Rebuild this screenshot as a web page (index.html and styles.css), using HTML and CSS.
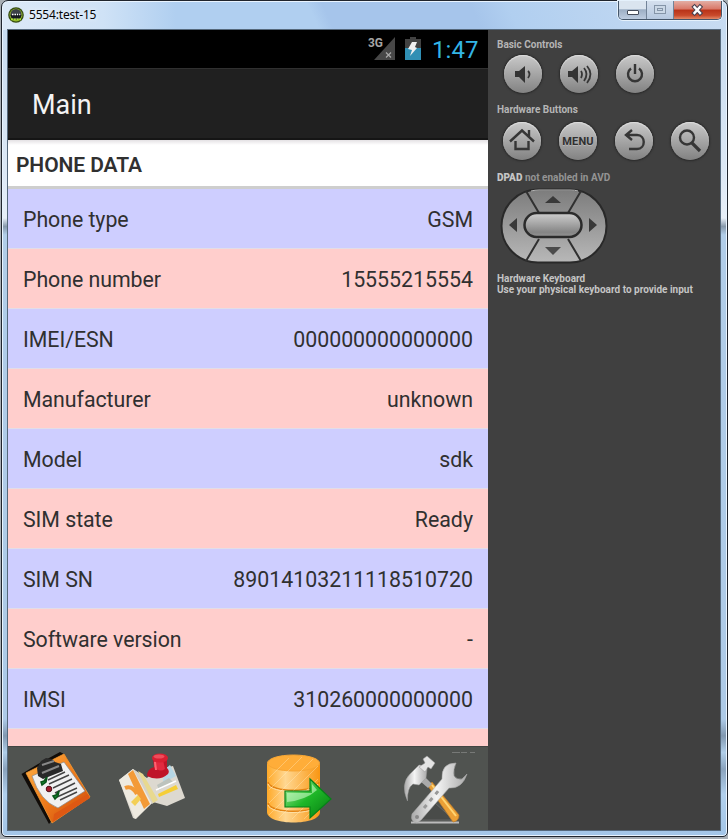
FILE: index.html
```html
<!DOCTYPE html>
<html lang="en">
<head>
<meta charset="utf-8">
<title>5554:test-15</title>
<link rel="stylesheet" href="styles.css">
</head>
<body>
<svg class="defs" width="0" height="0" aria-hidden="true">
  <defs>
    <linearGradient id="metal" x1="0" y1="0" x2="0" y2="1"><stop offset="0" stop-color="#d0d0d0"/><stop offset=".8" stop-color="#858585"/><stop offset="1" stop-color="#959595"/></linearGradient>
    <linearGradient id="metalUp" x1="0" y1="0" x2="0" y2="1"><stop offset="0" stop-color="#7c7c7c"/><stop offset="1" stop-color="#b8b8b8"/></linearGradient>
    <linearGradient id="orange" x1="0" y1="0" x2="1" y2="1"><stop offset="0" stop-color="#ffb347"/><stop offset=".5" stop-color="#ef7c1c"/><stop offset="1" stop-color="#c94308"/></linearGradient>
    <linearGradient id="gold" x1="0" y1="0" x2="1" y2="0"><stop offset="0" stop-color="#ffa928"/><stop offset=".35" stop-color="#ffd791"/><stop offset="1" stop-color="#f99612"/></linearGradient>
    <linearGradient id="green" x1="0" y1="0" x2="1" y2="1"><stop offset="0" stop-color="#b4f0a8"/><stop offset=".5" stop-color="#1fb728"/><stop offset="1" stop-color="#047b10"/></linearGradient>
    <linearGradient id="steel" x1="0" y1="0" x2="1" y2="0"><stop offset="0" stop-color="#aaa"/><stop offset=".45" stop-color="#f4f4f4"/><stop offset="1" stop-color="#aaa"/></linearGradient>
  </defs>
</svg>
<div class="window">
  <header class="titlebar">
    <svg class="app-icon" width="16" height="16" viewBox="0 0 16 16"><circle cx="8" cy="8" r="7.8" fill="#354a12"/><circle cx="8" cy="8" r="6.5" fill="#91b52c"/><circle cx="8" cy="7.5" r="5.5" fill="#3c4148"/><path d="M2.5 8h11l-1 3h-9z" fill="#15191d"/><path d="M4 7.5h1.5M6.5 7.5H8M9 7.5h1M11.2 7.5h1" stroke="#fff" stroke-width="1.5"/><path d="M3 12.4h10" stroke="#a9e12d" stroke-width="1.8" stroke-dasharray="2 .8"/></svg>
    <span class="title">5554:test-15</span>
    <div class="caption">
      <span class="cap min"><svg width="27" height="18"><rect x="8.5" y="9.5" width="11" height="4" rx=".5" fill="#fff" stroke="#454c5b"/></svg></span>
      <span class="cap max"><svg width="26" height="18"><g fill="none" stroke="#8595a8"><rect x="7.5" y="4.5" width="11" height="8" fill="#cbd8e6"/><rect x="10.5" y="7.5" width="5" height="2"/></g></svg></span>
      <span class="cap close"><svg width="47" height="18"><path d="M20.500 6l5.500 6M26 6l-5.500 6" stroke="#4b4350" stroke-width="4.500" stroke-linecap="square"/><path d="M20.500 6l5.500 6M26 6l-5.500 6" stroke="#fff" stroke-width="2.400" stroke-linecap="square"/></svg></span>
    </div>
  </header>
  <div class="client">
    <main class="phone">
      <div class="status">
        <svg class="signal" width="30" height="26" viewBox="0 0 30 26"><path d="M27 2v23H6z" fill="#474747"/><path d="M18 17.500l5 5M23 17.500l-5 5" stroke="#aaa" stroke-width="1.200"/><text x="0" y="12" class="net" textLength="15" lengthAdjust="spacingAndGlyphs">3G</text></svg>
        <svg class="battery" width="16" height="24" viewBox="0 0 16 24"><path d="M0 3h5V1h6v2h5v9H0z" fill="#424242"/><path d="M0 12h16v12H0z" fill="#308fb4"/><path d="M7 6h5l-2 5 2 1-7 8 2-6-4-1z" fill="#f0f0f0"/></svg>
        <span class="clock">1:47</span>
      </div>
      <div class="actionbar">Main</div>
      <h1 class="section">PHONE DATA</h1>
      <dl class="rows">
        <div class="row"><dt>Phone type</dt><dd>GSM</dd></div>
        <div class="row"><dt>Phone number</dt><dd>15555215554</dd></div>
        <div class="row"><dt>IMEI/ESN</dt><dd>000000000000000</dd></div>
        <div class="row"><dt>Manufacturer</dt><dd>unknown</dd></div>
        <div class="row"><dt>Model</dt><dd>sdk</dd></div>
        <div class="row"><dt>SIM state</dt><dd>Ready</dd></div>
        <div class="row"><dt>SIM SN</dt><dd>89014103211118510720</dd></div>
        <div class="row"><dt>Software version</dt><dd>-</dd></div>
        <div class="row"><dt>IMSI</dt><dd>310260000000000</dd></div>
        <div class="row"></div>
      </dl>
      <nav class="tools">
        <svg width="96" height="84" viewBox="0 0 96 84"><path d="M13.500 27L30 17l22-12 4 2 5 8-10 50-10 12z" fill="#110c08"/><path d="M18 26l38-19 26 43-38 26z" fill="url(#orange)" stroke="#f59a32" stroke-width=".8"/><path d="M46 67l34-20 2 4-37 24z" fill="#dd5813"/><path d="M24 29l32-14 21 29-27 17q-18-7-26-32" fill="#f1f1f1" stroke="#888" stroke-width=".7"/><path d="M29 21l4-7 5-3 6 1 3 3 6 2 2 7-20 8-5-3z" fill="#292929"/><path d="M34 18l12-4M34 26l17-7" stroke="#888" stroke-width="2"/><g stroke="#444" stroke-width="1.400"><path d="M40 33l17-8M41 37l20-9M45 41l19-9M47 46l20-10M49 50l20-9M52 53l17-8"/></g><path d="M33 35l3-1 3-4-1 5-4 3zM45 49l3-1 3-4-1 5-3 3z" fill="#168c32" stroke="#075318" stroke-width="1.500"/><circle cx="41" cy="42" r="2.800" fill="#a51d2c" stroke="#501018"/></svg>
        <svg width="96" height="84" viewBox="0 0 96 84"><path d="M15 33l14-11 14 9 8-8 18-4 12 32-18 8-14-4-17 17-3-1z" fill="#ddd9d0"/><path d="M15 33l14-11 19 34-17 16z" fill="#eeeae0"/><path d="M29 22l12 9 10 24-3 2z" fill="#d7d2c6"/><path d="M34 24l5 3 15 26-5 3z" fill="#e8d98f"/><path d="M24 27l5-4 17 34-6 5z" fill="#f39a37"/><path d="M21 41q7-3 12 6" fill="none" stroke="#f39a37" stroke-width="4"/><path d="M27 55l7-7 3 4-6 7z" fill="#f3cf55"/><path d="M54 47l18-9 2 4-19 8z" fill="#f5ce37"/><path d="M60 23l6-5 6 11-13 7z" fill="#b6d7e5"/><path d="M53 38l12-7 4 4-14 8z" fill="#bdc3bd"/><path d="M52 43l20-9" stroke="#fff" stroke-width="1.500"/><path d="M43 29q0-7 7-9l-1-8h14v9q3 3 1 6-9 8-21 2" fill="#bf1428"/><path d="M50 20v-7h9l2 9q-5 4-11-2" fill="#e22a40"/><ellipse cx="56" cy="11" rx="8" ry="4.500" fill="#d91f32"/><ellipse cx="55" cy="9.500" rx="5.500" ry="2" fill="#ee4d5b"/><path d="M51 15l1 8" stroke="#ff6170" stroke-width="2"/></svg>
        <svg class="database" width="192" height="84" viewBox="0 0 192 84"><path d="M67 17v48c0 14 53 14 53 0V17z" fill="url(#gold)"/><ellipse cx="93.500" cy="16" rx="26" ry="8" fill="#ffad39" stroke="#f7a634"/><path d="M68 35c2 11 49 11 51 0M68 56c2 11 49 11 51 0" fill="none" stroke="#e48413" stroke-width="1.500"/><path d="M68 37c3 10 47 10 50 0M68 58c3 10 47 10 50 0" fill="none" stroke="#ffe0a5"/><g stroke="#fff1cc" stroke-width=".7" opacity=".5"><path d="M69 31l20-20M69 43l33-33M69 56l44-44M69 68l49-49M79 71l39-39M92 72l26-26M104 72l14-14"/></g><path d="M85 44h25V32l21 20-21 19V60H85z" fill="url(#green)" stroke="#078118" stroke-width="1.200"/><path d="M87 46h25v-9l5 6q-11 10-30 12z" fill="#d3ffd0" opacity=".55"/></svg>
        <svg width="96" height="84" viewBox="0 0 96 84"><path d="M19 75.500h48" stroke="#bbb" stroke-width="2"/><path d="M43 56L29 73h33z" fill="#494b49" stroke="#777" stroke-width=".6"/><path d="M36 39l4-4 27 33q0 6-6 7z" fill="#eba036" stroke="#bc7b2a" stroke-width=".7"/><path d="M40 38l24 31" stroke="#ffd573" stroke-width="2"/><path d="M28 34l5-4 7 7-4 4z" fill="#aaa"/><path d="M15.500 54Q8 37 18 27l9-9q6 0 8 4l-1 9-7 7-6-1q-6 4-5.500 17" fill="url(#steel)" stroke="#999" stroke-width=".5"/><path d="M31 12l4-3 8 7-4 6-3-2-3 5-6-5 6-4z" fill="#e4e4e4" stroke="#999" stroke-width=".5"/><path d="M64 16q-15 0-14 16L20 67q-2 8 5 9l4-3 28-32q13 1 18-14l-5 5q-5 1-8-3-1-7 2-13" fill="url(#steel)" stroke="#aaa" stroke-width=".6"/><circle cx="25" cy="70" r="2" fill="#888"/><path d="M32 61l15-18" stroke="#999" stroke-width="3" stroke-dasharray="4 5"/><path d="M60 5.500h8M69 5.500h6M78 5.500h5" stroke="#777977"/></svg>
      </nav>
    </main>
    <aside class="panel">
      <h2>Basic Controls</h2>
      <div class="keys basic">
        <button class="key"><svg width="38" height="38" viewBox="0 0 38 38"><path d="M11 16h4l6-5v17l-6-6h-4z" fill="#343434"/><path d="M24 16q3 3 0 7" class="line thin"/></svg></button>
        <button class="key"><svg width="38" height="38" viewBox="0 0 38 38"><path d="M8 16h4l6-5v17l-6-6H8z" fill="#343434"/><path d="M21 16q2 3 0 7M24 13q5 6 0 13M27 11q7 8 0 17" class="line thin"/></svg></button>
        <button class="key"><svg width="38" height="38" viewBox="0 0 38 38"><path d="M15 13.500a7 7 0 1 0 8 0M19 9v10" class="line"/></svg></button>
      </div>
      <h2>Hardware Buttons</h2>
      <div class="keys hard">
        <button class="key"><svg width="38" height="38" viewBox="0 0 38 38"><path d="M7 19.500L19 8.500l12 11M26 14V8M12.500 19v8h13v-8" class="line"/></svg></button>
        <button class="key menu">MENU</button>
        <button class="key"><svg width="38" height="38" viewBox="0 0 38 38"><path d="M17 8l-6 5 6 5M11 13h11c9 0 9 14 0 14h-8" class="line"/></svg></button>
        <button class="key"><svg width="38" height="38" viewBox="0 0 38 38"><circle cx="16" cy="15.500" r="7" class="line"/><path d="M21 21l8 8" class="line thick"/></svg></button>
      </div>
      <h2><b>DPAD</b> <span>not enabled in AVD</span></h2>
      <svg class="dpad" width="108" height="78" viewBox="0 0 108 78"><rect x="1.500" y="2.500" width="105" height="73" rx="36.500" fill="url(#metalUp)" stroke="#292929" stroke-width="2"/><path d="M31 4q4-1 8-1h31q5 0 8 1" stroke="#b9b9b9" fill="none"/><path d="M26 4l13 22M81 4L68 26M26 74l13-22M81 74L68 52" stroke="#303030" stroke-width="2"/><rect x="24.500" y="26" width="57" height="24" rx="12" fill="url(#metal)" stroke="#2b2b2b" stroke-width="2.500"/><path d="M53 9l8 7H45z" fill="#393939"/><path d="M45 60h16l-8 8z" fill="#4b4b4b"/><path d="M17 31v14l-8-7zM89 31v14l8-7z" fill="#393939"/></svg>
      <p class="keyboard">Hardware Keyboard<br><span>Use your physical keyboard to provide input</span></p>
    </aside>
  </div>
</div>
</body>
</html>
```
FILE: styles.css
```css
* { box-sizing: border-box; }
body {
  margin: 0;
  width: 728px;
  height: 839px;
  overflow: hidden;
  background: #a9afb5;
  font-family: Roboto, "Liberation Sans", sans-serif;
}
svg { display: block; flex: none; }
.defs { position: absolute; }
.window {
  width: 727px;
  height: 837px;
  margin-left: 1px;
  padding: 0 5px;
  border: 1px solid #20252d;
  border-radius: 7px 7px 5px 5px;
  box-shadow: inset 0 0 0 1px #e9f4ff;
  background:
    linear-gradient(90deg, #dce9f7 0, #cfe2f6 14%, transparent 24%) 0 0 / 100% 29px no-repeat,
    linear-gradient(65deg, #b0cff0 0 43%, #a6c5eb 45% 65%, #b1cff0 70%, #c9dcf2) 0 0 / 100% 29px no-repeat,
    linear-gradient(#c3d9ef 0, #dce8f5 20%, #e7eff8 26%, #8799ab 27%, #b1cde8 28%, #adcae7 86%, #8198b0 88%, #b0cee9 90%, #8aa3bd 92%, #b1d0ed 95%, #a3c5e7);
}
.titlebar { display: flex; height: 28px; }
.app-icon { margin: 6px 5px 0 1px; }
.title { padding-top: 6px; font: 12px/16px "Noto Sans", "Open Sans", sans-serif; letter-spacing: -.18px; color: #050505; text-shadow: 0 0 5px #fff; }
.caption { display: flex; height: 19px; margin: 0 0 0 auto; border: 1px solid #45566a; border-top: 0; border-radius: 0 0 5px 5px; overflow: hidden; box-shadow: 0 0 0 1px #e5f1fc; }
.cap { display: block; border-right: 1px solid #728398; background: linear-gradient(#dae4ef 0 45%, #9caec4 48%, #bdcce0); }
.max { background: linear-gradient(#d5e0ee, #b6c8df); }
.close { border: 0; background: linear-gradient(#e3aea4 0, #d97767 45%, #b83218 50%, #c94a2b 80%, #e38967); }
.client { display: flex; width: 714px; height: 802px; border: 1px solid #56697c; background: #404040; }
.phone { display: flex; flex-direction: column; width: 480px; height: 800px; background: #000; overflow: hidden; }
.status { display: flex; height: 38px; justify-content: flex-end; align-items: flex-start; background: #000; }
.signal { margin: 5px 7px 0 0; }
.net { font: bold 12px Roboto, sans-serif; fill: #a5a5a5; }
.battery { margin: 6px 11px 0 0; }
.clock { width: 47px; margin-right: 9px; font-size: 24px; line-height: 40px; letter-spacing: .1px; color: #33b5e5; white-space: nowrap; }
.actionbar { height: 72px; border-top: 1px solid #303030; border-bottom: 2px solid #151515; padding-left: 24px; background: #202020; font-size: 27px; line-height: 72px; color: #f3f3f3; }
.section { height: 49px; margin: 0; padding-left: 8px; border-bottom: 3px solid #cecece; background: linear-gradient(#e4e1e4, #fff 5px); font-size: 21px; font-weight: 600; line-height: 51px; letter-spacing: -.1px; color: #303030; }
.rows { height: 557px; margin: 0; overflow: hidden; background: #fff; }
.row { display: flex; justify-content: space-between; height: 60px; padding: 0 15px; border-bottom: 1px solid #e3dde8; background: #ceceff; font-size: 21.333px; line-height: 61px; color: #303030; }
.row:nth-child(even) { background: #ffcecc; }
dt { letter-spacing: -.05px; }
dd { margin: 0; }
.tools { display: grid; grid-template-columns: 96px 96px 192px 96px; height: 84px; background: #505350; border-top: 1px solid #424442; }
.panel { width: 232px; padding: 9px 0 0 9px; color: #c5c5c5; font-size: 10px; font-weight: 700; }
h2 { height: 12px; margin: 0; font-size: 10px; line-height: 12px; color: #b5b5b5; }
h2 b { color: #c5c5c5; }
h2 span { color: #949494; }
.keys { display: flex; gap: 18px; }
.basic { height: 53px; padding: 4px 0 0 7px; }
.hard { height: 56px; padding: 6px 0 0 6px; }
.key { display: block; flex: none; width: 38px; height: 38px; border: 0; padding: 0; border-radius: 50%; background: linear-gradient(#c9c9c9, #828282); box-shadow: 0 0 2px 1px #292929, inset 0 1px 1px #dedede; }
.menu { font: bold 11px Roboto, sans-serif; letter-spacing: .15px; color: #303030; text-shadow: 0 1px #b5b5b5; }
.line { fill: none; stroke: #363636; stroke-width: 2.4; }
.thin { stroke-width: 1.8; }
.thick { stroke-width: 3.2; }
.dpad { margin: 3px 0 0 3px; }
.keyboard { margin: 8px 0 0; line-height: 11px; white-space: nowrap; }
```
